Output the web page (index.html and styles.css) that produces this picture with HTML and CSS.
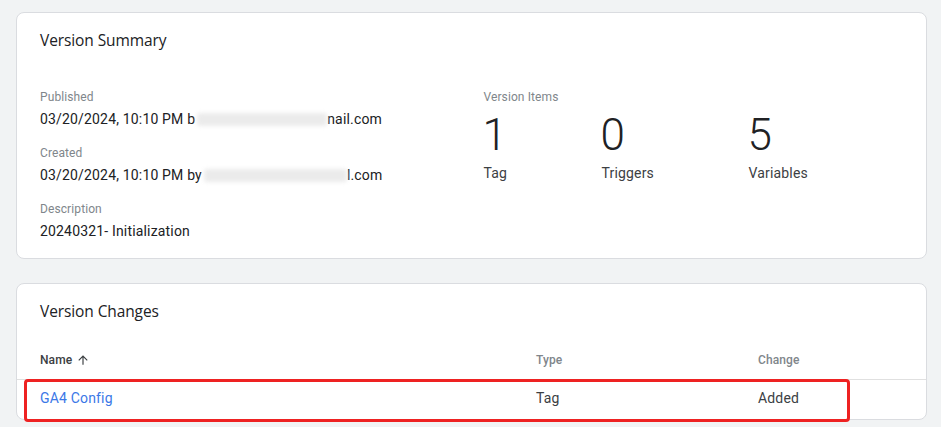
FILE: index.html
```html
<!DOCTYPE html>
<html lang="en">
<head>
<meta charset="utf-8">
<title>Version</title>
<link rel="stylesheet" href="styles.css">
</head>
<body>
<div class="page">
  <section class="card summary">
    <h2 class="card-title">Version Summary</h2>
    <div class="summary-grid">
      <div class="meta">
        <div class="field">
          <div class="label">Published</div>
          <div class="value">03/20/2024, 10:10 PM b<span class="blur b1"></span>nail.com</div>
        </div>
        <div class="field">
          <div class="label">Created</div>
          <div class="value">03/20/2024, 10:10 PM by<span class="blur b2"></span>l.com</div>
        </div>
        <div class="field">
          <div class="label">Description</div>
          <div class="value">20240321- Initialization</div>
        </div>
      </div>
      <div class="items">
        <div class="label">Version Items</div>
        <div class="counts">
          <div class="count c-tag"><div class="num">1</div><div class="count-label">Tag</div></div>
          <div class="count c-trig"><div class="num">0</div><div class="count-label">Triggers</div></div>
          <div class="count"><div class="num">5</div><div class="count-label">Variables</div></div>
        </div>
      </div>
    </div>
  </section>

  <section class="card changes">
    <h2 class="card-title">Version Changes</h2>
    <div class="table">
      <div class="row head">
        <div class="th th-name">Name
          <svg class="sort" viewBox="0 0 24 24" width="14" height="14"><path d="M4 12l1.41 1.41L11 7.83V20h2V7.83l5.58 5.59L20 12l-8-8-8 8z" fill="#3c4043"/></svg>
        </div>
        <div class="th">Type</div>
        <div class="th">Change</div>
      </div>
      <div class="row data">
        <div class="td"><a class="link" href="#">GA4 Config</a></div>
        <div class="td">Tag</div>
        <div class="td">Added</div>
        <div class="highlight"></div>
      </div>
    </div>
  </section>
</div>
</body>
</html>
```

FILE: styles.css
```css
* { box-sizing: border-box; }
html, body { margin: 0; padding: 0; }
body {
  background: #f1f3f4;
  font-family: Roboto, "Liberation Sans", Arial, sans-serif;
  color: #202124;
  width: 941px;
  height: 427px;
  overflow: hidden;
}
.page {
  padding: 12px 14px 0 16px;
  display: flex;
  flex-direction: column;
  gap: 24px;
}
.card {
  background: #fff;
  border: 1px solid #dadce0;
  border-radius: 8px;
}
.card-title {
  margin: 0;
  font-family: "Open Sans", Roboto, sans-serif;
  font-weight: 400;
  font-size: 15.5px;
  line-height: 24px;
  color: #202124;
  padding: 15px 23px 0;
  letter-spacing: -0.1px;
}
.summary { height: 247px; }
.summary-grid {
  display: grid;
  grid-template-columns: 1fr 1fr;
  gap: 24px;
  padding: 37px 23px 0;
}
.label {
  font-size: 12px;
  line-height: 16px;
  color: #80868b;
  letter-spacing: 0.1px;
}
.field + .field { margin-top: 16px; }
.value {
  margin-top: 4px;
  font-size: 14px;
  line-height: 20px;
  color: #202124;
  white-space: nowrap;
  letter-spacing: 0.17px;
}
.blur {
  display: inline-block;
  height: 13px;
  vertical-align: -2px;
  background: #ebebeb;
  filter: blur(2px);
  border-radius: 3px;
}
.b1 { width: 130px; margin-left: 2px; }
.b2 { width: 143px; margin-left: 2px; }
.counts {
  display: flex;
  margin-top: 4px;
}
.count { display: flex; flex-direction: column; }
.c-tag { width: 118px; }
.c-trig { width: 147px; }
.num {
  font-size: 44px;
  line-height: 52px;
  font-weight: 300;
  color: #202124;
  margin-left: -1px;
}
.count-label {
  margin-top: 2px;
  font-size: 14px;
  line-height: 20px;
  color: #3c4043;
  letter-spacing: 0.17px;
}
.changes { height: 137px; }
.table { margin-top: 17px; }
.row {
  display: grid;
  grid-template-columns: 496px 222px 1fr;
  padding-left: 23px;
  align-items: center;
}
.head {
  height: 40px;
  border-bottom: 1px solid #e0e0e0;
}
.th {
  font-size: 12px;
  font-weight: 500;
  color: #80868b;
  display: flex;
  align-items: center;
  letter-spacing: 0.1px;
}
.th-name { color: #3c4043; }
.sort { margin-left: 4px; }
.data {
  position: relative;
  height: 36px;
}
.td {
  font-size: 14px;
  color: #3c4043;
  letter-spacing: 0.17px;
}
.link {
  color: #3b78e7;
  text-decoration: none;
}
.highlight {
  position: absolute;
  left: 7px;
  top: -1px;
  width: 826px;
  height: 43px;
  border: 3px solid #ee2222;
  border-radius: 4px;
  pointer-events: none;
}
```
